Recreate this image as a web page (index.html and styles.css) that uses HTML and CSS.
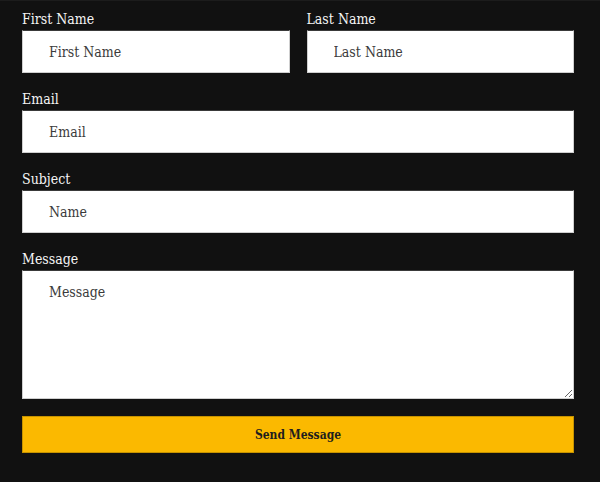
FILE: index.html
```html
<!DOCTYPE html>
<html lang="en">
<head>
    <meta charset="UTF-8">
    <meta name="viewport" content="width=device-width, initial-scale=1.0">
    <title>Contact</title>
    <link rel="stylesheet" href="styles.css">
</head>
<body>
    <form class="contact-form">
        <div class="row">
            <div class="field">
                <label for="firstName">First Name</label>
                <input type="text" id="firstName" placeholder="First Name">
            </div>
            <div class="field">
                <label for="lastName">Last Name</label>
                <input type="text" id="lastName" placeholder="Last Name">
            </div>
        </div>
        <div class="field">
            <label for="email">Email</label>
            <input type="email" id="email" placeholder="Email">
        </div>
        <div class="field">
            <label for="subject">Subject</label>
            <input type="text" id="subject" placeholder="Name">
        </div>
        <div class="field">
            <label for="message">Message</label>
            <textarea id="message" placeholder="Message"></textarea>
        </div>
        <button type="submit">Send Message</button>
    </form>
</body>
</html>
```

FILE: styles.css
```css
body {
    margin: 0;
    background: #111111;
    font-family: 'DejaVu Serif Condensed', 'DejaVu Serif', 'Liberation Serif', serif;
    font-stretch: condensed;
    color: #f5f5f5;
    min-height: 100vh;
    border-top: 1px solid #1c1c1c;
    box-sizing: border-box;
}
.contact-form {
    width: 552px;
    margin-left: 22px;
    padding-top: 9px;
}
.row {
    display: grid;
    grid-template-columns: 1fr 1fr;
    gap: 17px;
}
.field {
    margin-bottom: 17px;
}
label {
    display: block;
    font-size: 14px;
    line-height: 18px;
    margin-bottom: 2px;
}
input,
textarea {
    display: block;
    width: 100%;
    box-sizing: border-box;
    height: 43px;
    padding: 0 26px;
    border: 1px solid #cfcfcf;
    border-top-color: #3a3a3a;
    background: #ffffff;
    font-family: inherit;
    font-stretch: inherit;
    font-size: 14px;
    color: #333;
    outline: none;
}
input::placeholder,
textarea::placeholder {
    color: #3b3b3b;
}
textarea {
    height: 129px;
    padding-top: 13px;
    resize: vertical;
}
button {
    display: block;
    width: 100%;
    height: 37px;
    margin-top: 1px;
    background: #fbb900;
    border: 1px solid #c69300;
    font-family: inherit;
    font-stretch: inherit;
    font-weight: bold;
    font-size: 12px;
    color: #1e1e1e;
    cursor: pointer;
}
```
